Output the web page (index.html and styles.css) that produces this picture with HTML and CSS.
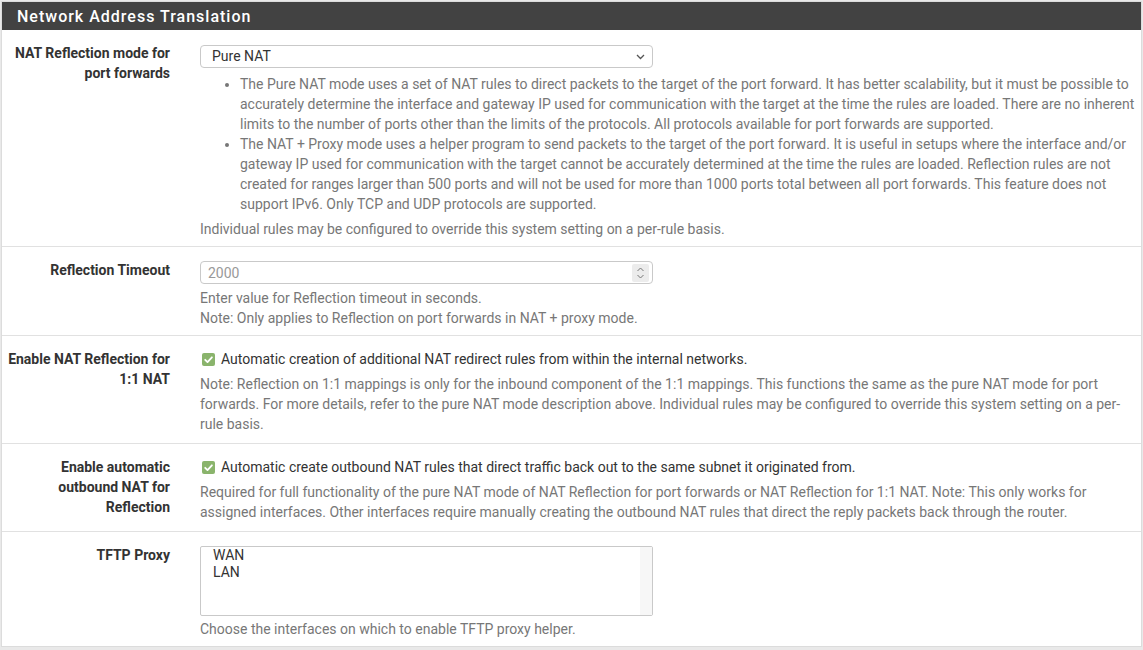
FILE: index.html
```html
<!DOCTYPE html>
<html lang="en">
<head>
<meta charset="utf-8">
<title>Network Address Translation</title>
<link rel="stylesheet" href="styles.css">
</head>
<body>
<div class="panel">
  <div class="panel-heading">Network Address Translation</div>
  <div class="panel-body">

    <div class="form-row">
      <div class="form-label">NAT Reflection mode for port forwards</div>
      <div class="form-control-col">
        <div class="select">
          <span>Pure NAT</span>
          <svg class="chev" width="9" height="6" viewBox="0 0 9 6"><path d="M1 1l3.5 3.5L8 1" fill="none" stroke="#555" stroke-width="1.3"/></svg>
        </div>
        <ul class="help-list">
          <li>The Pure NAT mode uses a set of NAT rules to direct packets to the target of the port forward. It has better scalability, but it must be possible to accurately determine the interface and gateway IP used for communication with the target at the time the rules are loaded. There are no inherent limits to the number of ports other than the limits of the protocols. All protocols available for port forwards are supported.</li>
          <li>The NAT + Proxy mode uses a helper program to send packets to the target of the port forward. It is useful in setups where the interface and/or gateway IP used for communication with the target cannot be accurately determined at the time the rules are loaded. Reflection rules are not created for ranges larger than 500 ports and will not be used for more than 1000 ports total between all port forwards. This feature does not support IPv6. Only TCP and UDP protocols are supported.</li>
        </ul>
        <div class="help help-after-list">Individual rules may be configured to override this system setting on a per-rule basis.</div>
      </div>
    </div>

    <div class="form-row">
      <div class="form-label">Reflection Timeout</div>
      <div class="form-control-col">
        <div class="number-input">
          <span class="placeholder">2000</span>
          <span class="spinner">
            <svg width="9" height="14" viewBox="0 0 9 14"><path d="M1.5 5L4.5 2l3 3M1.5 9l3 3 3-3" fill="none" stroke="#777" stroke-width="1"/></svg>
          </span>
        </div>
        <div class="help">Enter value for Reflection timeout in seconds.<br>Note: Only applies to Reflection on port forwards in NAT + proxy mode.</div>
      </div>
    </div>

    <div class="form-row form-row-check">
      <div class="form-label">Enable NAT Reflection for 1:1 NAT</div>
      <div class="form-control-col">
        <div class="check-line">
          <span class="checkbox"><svg width="13" height="13" viewBox="0 0 13 13"><path d="M3.2 6.8l2.3 2.3 4.4-4.8" fill="none" stroke="#fff" stroke-width="1.8" stroke-linecap="round" stroke-linejoin="round"/></svg></span>
          <span>Automatic creation of additional NAT redirect rules from within the internal networks.</span>
        </div>
        <div class="help help-after-check">Note: Reflection on 1:1 mappings is only for the inbound component of the 1:1 mappings. This functions the same as the pure NAT mode for port forwards. For more details, refer to the pure NAT mode description above. Individual rules may be configured to override this system setting on a per-rule basis.</div>
      </div>
    </div>

    <div class="form-row form-row-check">
      <div class="form-label">Enable automatic outbound NAT for Reflection</div>
      <div class="form-control-col">
        <div class="check-line">
          <span class="checkbox"><svg width="13" height="13" viewBox="0 0 13 13"><path d="M3.2 6.8l2.3 2.3 4.4-4.8" fill="none" stroke="#fff" stroke-width="1.8" stroke-linecap="round" stroke-linejoin="round"/></svg></span>
          <span>Automatic create outbound NAT rules that direct traffic back out to the same subnet it originated from.</span>
        </div>
        <div class="help help-after-check">Required for full functionality of the pure NAT mode of NAT Reflection for port forwards or NAT Reflection for 1:1 NAT. Note: This only works for assigned interfaces. Other interfaces require manually creating the outbound NAT rules that direct the reply packets back through the router.</div>
      </div>
    </div>

    <div class="form-row form-row-last">
      <div class="form-label">TFTP Proxy</div>
      <div class="form-control-col">
        <div class="listbox">
          <div class="listbox-items">
            <div class="option">WAN</div>
            <div class="option">LAN</div>
          </div>
          <div class="listbox-track"></div>
        </div>
        <div class="help help-after-listbox">Choose the interfaces on which to enable TFTP proxy helper.</div>
      </div>
    </div>

  </div>
</div>
</body>
</html>
```

FILE: styles.css
```css
* { box-sizing: border-box; }

html, body {
  margin: 0;
  padding: 0;
}

body {
  background: #e9e9e9;
  padding: 1px 1px 0 1px;
  font-family: Roboto, "Liberation Sans", Arial, sans-serif;
  font-size: 14px;
  line-height: 20px;
  color: #333;
}

.panel {
  background: #fff;
  border: 1px solid #dcdcdc;
  border-bottom: none;
}

.panel-heading {
  background: #424242;
  color: #fff;
  height: 28px;
  line-height: 29px;
  padding-left: 15px;
  font-size: 16px;
  font-weight: 500;
  letter-spacing: 1px;
}

.form-row {
  display: grid;
  grid-template-columns: 168px 1fr;
  column-gap: 30px;
  padding: 13px 3px 7px 0;
  border-bottom: 1px solid #e1e1e1;
}

.form-row-check {
  padding-bottom: 9px;
}

.form-row-last {
  border-bottom: 1px solid #dcdcdc;
}

.form-label {
  text-align: right;
  font-weight: 700;
  color: #333;
}

.form-control-col {
  min-width: 0;
}

.select {
  margin-top: 2px;
  width: 453px;
  height: 23px;
  border: 1px solid #c9c9c9;
  border-radius: 4px;
  display: flex;
  align-items: center;
  justify-content: space-between;
  padding: 0 7px 0 11px;
  color: #333;
  line-height: 21px;
}

.chev { display: block; }

.help-list {
  margin: 6px 0 0 0;
  padding-left: 40px;
  color: #777;
}

.help {
  color: #777;
  margin-top: 4px;
}

.help-after-list { margin-top: 5px; }
.help-after-check { margin-top: 5px; }
.help-after-listbox { margin-top: 3px; }

.number-input {
  margin-top: 1px;
  width: 453px;
  height: 23px;
  border: 1px solid #c9c9c9;
  border-radius: 4px;
  display: flex;
  align-items: center;
  justify-content: space-between;
  padding: 0 3px 0 7px;
}

.placeholder {
  color: #999;
}

.spinner {
  width: 17px;
  height: 18px;
  background: #ececec;
  border-radius: 2px;
  display: flex;
  align-items: center;
  justify-content: center;
}

.spinner svg { display: block; }

.check-line {
  display: flex;
  align-items: center;
  gap: 6px;
  color: #333;
  padding-left: 2px;
}

.checkbox {
  width: 13px;
  height: 13px;
  border-radius: 2px;
  background: #8ab46c;
  display: flex;
  flex: none;
}

.checkbox svg { display: block; }

.listbox {
  margin-top: 1px;
  width: 453px;
  height: 70px;
  border: 1px solid #c9c9c9;
  border-radius: 2px;
  display: flex;
}

.listbox-items {
  flex: 1;
  padding: 0 0 0 12px;
  line-height: 17px;
  color: #333;
}

.listbox-track {
  width: 12px;
  background: #f7f7f7;
}
```
